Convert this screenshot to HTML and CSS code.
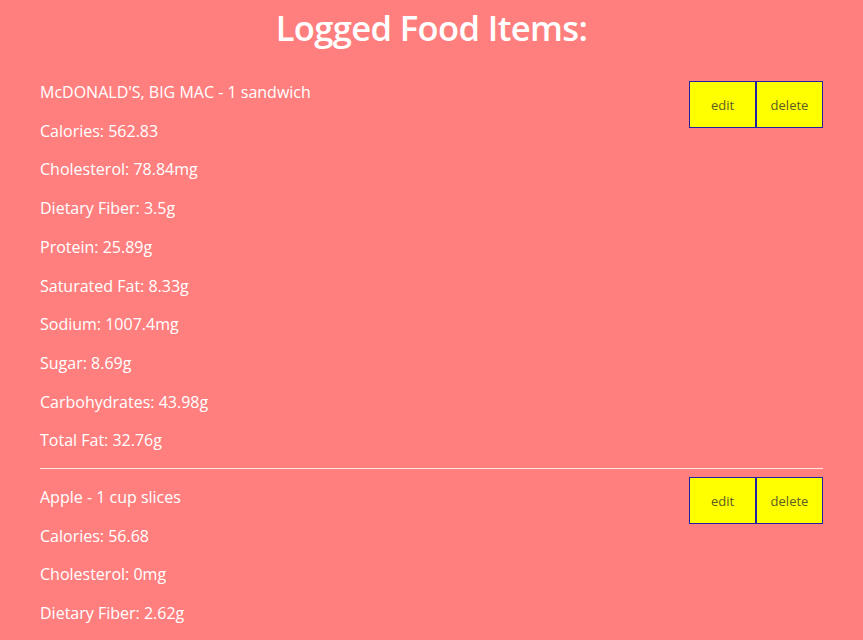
FILE: index.html
```html
<!DOCTYPE html>
<html>
<head>
<meta charset="utf-8">
<link rel="stylesheet" href="styles.css">
</head>
<body>
<h1 class="title">Logged Food Items:</h1>
<div class="list">
  <div class="item">
    <div class="facts">
      <p>McDONALD'S, BIG MAC - 1 sandwich</p>
      <p>Calories: 562.83</p>
      <p>Cholesterol: 78.84mg</p>
      <p>Dietary Fiber: 3.5g</p>
      <p>Protein: 25.89g</p>
      <p>Saturated Fat: 8.33g</p>
      <p>Sodium: 1007.4mg</p>
      <p>Sugar: 8.69g</p>
      <p>Carbohydrates: 43.98g</p>
      <p>Total Fat: 32.76g</p>
    </div>
    <div class="actions">
      <button class="btn">edit</button><button class="btn">delete</button>
    </div>
  </div>
  <hr class="sep">
  <div class="item item-next">
    <div class="facts">
      <p>Apple - 1 cup slices</p>
      <p>Calories: 56.68</p>
      <p>Cholesterol: 0mg</p>
      <p>Dietary Fiber: 2.62g</p>
    </div>
    <div class="actions">
      <button class="btn">edit</button><button class="btn">delete</button>
    </div>
  </div>
</div>
</body>
</html>
```
FILE: styles.css
```css
html, body {
  margin: 0;
  background: #ff7f7f;
}
body {
  font-family: "Open Sans", "Liberation Sans", sans-serif;
  color: #fff;
  overflow: hidden;
  height: 640px;
}
.title {
  margin: 6px 0 15px;
  text-align: center;
  font-size: 34.5px;
  font-weight: 600;
  line-height: 44px;
  letter-spacing: -0.6px;
}
.list {
  padding: 0 40px;
}
.item {
  display: flex;
  justify-content: space-between;
  align-items: flex-start;
}
.facts p {
  margin: 16px 0;
  font-size: 16px;
  line-height: 22.7px;
  letter-spacing: 0;
}
.actions {
  display: flex;
  margin-top: 16px;
}
.item-next .actions {
  margin-top: 8px;
}
.item-next .facts p:first-child {
  margin-top: 17px;
}
.btn {
  width: 67px;
  height: 47px;
  background: #ffff00;
  border: 1px solid #2222a0;
  color: #5c5c24;
  font-family: "Open Sans", sans-serif;
  font-size: 13px;
  padding: 0;
  margin: 0;
}
.sep {
  margin: 0;
  border: 0;
  border-top: 1px solid #ffe4e4;
}
```
